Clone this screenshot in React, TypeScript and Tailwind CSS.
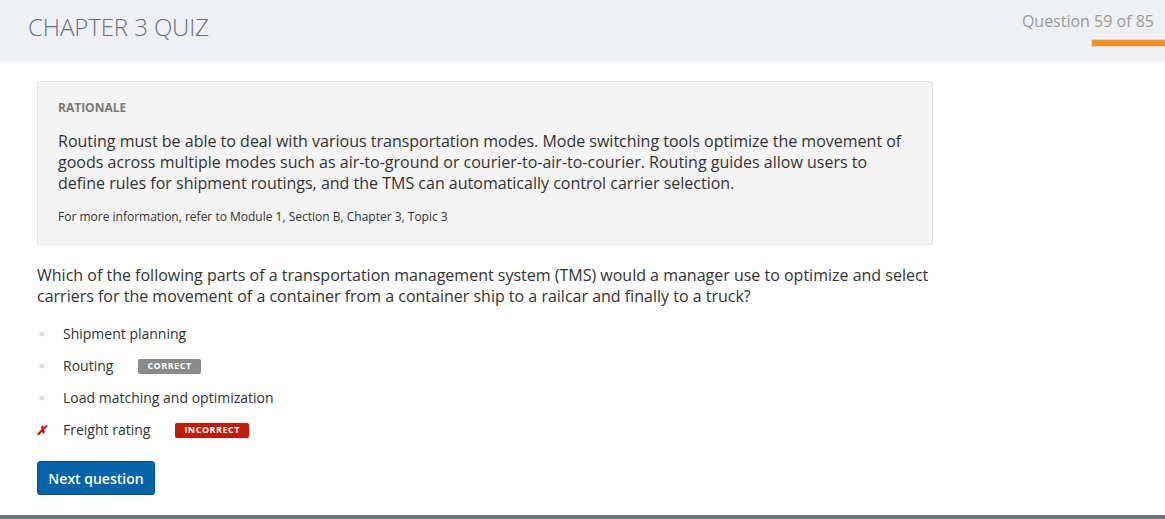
import React from 'react';

interface Option {
  label: string;
  status?: 'correct' | 'incorrect';
}

const options: Option[] = [
  { label: 'Shipment planning' },
  { label: 'Routing', status: 'correct' },
  { label: 'Load matching and optimization' },
  { label: 'Freight rating', status: 'incorrect' },
];

export default function App() {
  return (
    <div
      className="relative w-[1165px] h-[519px] bg-white overflow-hidden"
      style={{ fontFamily: '"Open Sans", "Liberation Sans", sans-serif' }}
    >
      {/* Header */}
      <div className="h-[62px] bg-[#eff0f4] flex justify-between">
        <h1 className="pl-[28px] pt-[11px] text-[24px] leading-[32px] font-light text-[#6a7282] tracking-[-0.1px]">
          CHAPTER 3 QUIZ
        </h1>
        <div className="flex flex-col items-end pt-[10px]">
          <span className="pr-[11px] text-[16px] leading-[23px] text-[#9b9b9b]">Question 59 of 85</span>
          <div className="mt-[6px] w-[74px] h-[8px] bg-[#f39020] border-t border-l border-b border-[#d8d8d8]" />
        </div>
      </div>

      <div className="pl-[37px] pt-[19px]">
        {/* Rationale */}
        <div className="w-[896px] h-[164px] bg-[#f4f4f4] border border-[#e4e4e4] rounded-[3px] px-[20px] pt-[17px]">
          <div className="text-[12px] leading-[18px] font-bold text-[#7a7a7a]">RATIONALE</div>
          <p className="mt-[14px] text-[16px] leading-[21px] text-[#333]">
            Routing must be able to deal with various transportation modes. Mode switching tools optimize the movement of
            goods across multiple modes such as air-to-ground or courier-to-air-to-courier. Routing guides allow users to
            define rules for shipment routings, and the TMS can automatically control carrier selection.
          </p>
          <p className="mt-[14px] text-[12px] leading-[18px] text-[#333]">
            For more information, refer to Module 1, Section B, Chapter 3, Topic 3
          </p>
        </div>

        {/* Question */}
        <p className="mt-[20px] w-[900px] text-[16px] leading-[21px] text-[#333]">
          Which of the following parts of a transportation management system (TMS) would a manager use to optimize and select
          carriers for the movement of a container from a container ship to a railcar and finally to a truck?
        </p>

        <ul className="mt-[11px] flex flex-col">
          {options.map((opt) => (
            <li key={opt.label} className="h-[32px] flex items-center">
              <span className="w-[26px] flex items-center">
                {opt.status === 'incorrect' ? (
                  <span className="text-[#e00000] text-[13px] font-bold italic leading-none ml-[-1px]">✗</span>
                ) : (
                  <span className="ml-[3px] w-[4px] h-[4px] rotate-45 border border-[#cfcfcf] bg-[#f0f0f0]" />
                )}
              </span>
              <span className="text-[14px] leading-[20px] text-[#333]">{opt.label}</span>
              {opt.status === 'correct' && (
                <span className="ml-[25px] h-[15px] px-[9px] flex items-center bg-[#8a8a8a] rounded-[2px] text-[9px] font-bold tracking-[0.5px] text-white">
                  CORRECT
                </span>
              )}
              {opt.status === 'incorrect' && (
                <span className="ml-[25px] h-[15px] px-[9px] flex items-center bg-[#c41a00] rounded-[2px] text-[9px] font-bold tracking-[0.5px] text-white">
                  INCORRECT
                </span>
              )}
            </li>
          ))}
        </ul>

        <button className="mt-[15px] w-[118px] h-[34px] bg-[#0563a9] border border-[#04518c] rounded-[3px] text-white text-[14px] font-semibold">
          Next question
        </button>
      </div>

      <div className="absolute left-0 bottom-0 w-full h-[4px] bg-[#6b7780]" />
    </div>
  );
}
